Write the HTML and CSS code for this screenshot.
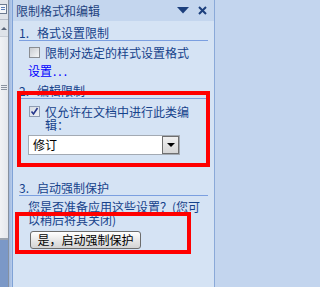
FILE: index.html
```html
<!DOCTYPE html>
<html lang="zh-CN">
<head>
<meta charset="utf-8">
<link rel="stylesheet" href="styles.css">
</head>
<body>
<div class="side">
  <div class="side-top">
    <svg class="doc-icon" width="9" height="12" viewBox="0 0 9 12"><rect x="0.5" y="1.5" width="7" height="9" fill="#f4f6f9" stroke="#6b7a90"/><rect x="2" y="4" width="4" height="1" fill="#5d7fb8"/><rect x="2" y="6" width="4" height="1" fill="#5d7fb8"/></svg>
  </div>
  <div class="side-arrow"><span class="up"></span></div>
  <div class="thumb"><span class="grip"></span></div>
  <div class="side-bottom"></div>
</div>
<div class="split"></div>
<div class="panel">
  <div class="titlebar">
    <span class="title">限制格式和编辑</span>
    <svg class="tb-icon" width="12" height="7" viewBox="0 0 12 7"><polygon points="0,0 12,0 6,6.5" fill="#1c3f7c"/></svg>
    <svg class="tb-icon close" width="9" height="9" viewBox="0 0 9 9"><path d="M1 1 L8 8 M8 1 L1 8" stroke="#1c3f7c" stroke-width="2"/></svg>
  </div>
  <div class="content">
    <div class="heading"><span class="num">1.</span>格式设置限制</div>
    <div class="check-row first">
      <span class="box"></span>
      <span class="label">限制对选定的样式设置格式</span>
    </div>
    <div class="link">设置<span class="dots">...</span></div>

    <div class="heading second"><span class="num">2.</span>编辑限制</div>
    <div class="check-row second">
      <span class="box checked"><svg width="9" height="9" viewBox="0 0 9 9"><path d="M1.5 4.5 L3.5 7 L7.5 1" fill="none" stroke="#26388e" stroke-width="1.6"/></svg></span>
      <span class="label">仅允许在文档中进行此类编辑：</span>
    </div>
    <div class="select">
      <span class="sel-text">修订</span>
      <span class="sel-btn"><span class="down"></span></span>
    </div>

    <div class="heading third"><span class="num">3.</span>启动强制保护</div>
    <div class="para">您是否准备应用这些设置？(您可以稍后将其关闭)</div>
    <div class="btn-row"><span class="button">是，启动强制保护</span></div>
  </div>
</div>
<div class="mark mark-one"></div>
<div class="mark mark-two"></div>
</body>
</html>
```

FILE: styles.css
```css
html, body {
  margin: 0;
  padding: 0;
}
body {
  width: 216px;
  height: 287px;
  overflow: hidden;
  display: flex;
  position: relative;
  background: #c3d5ee;
  font-family: "Noto Sans CJK SC", "Noto Sans", sans-serif;
  font-size: 12px;
  color: #15428b;
}
.side {
  width: 8px;
  display: flex;
  flex-direction: column;
  background: #dfe3e9;
  border-right: 1px solid #8590a0;
}
.side-top {
  height: 20px;
  border-bottom: 1px solid #b6bdc8;
  display: flex;
  align-items: flex-start;
  padding-top: 3px;
  box-sizing: border-box;
}
.doc-icon {
  margin-left: -1px;
}
.side-arrow {
  height: 16px;
  display: flex;
  justify-content: center;
  align-items: center;
}
.up {
  width: 0;
  height: 0;
  border-left: 3px solid transparent;
  border-right: 3px solid transparent;
  border-bottom: 3px solid #5a6578;
}
.thumb {
  flex: 0 0 204px;
  background: linear-gradient(90deg, #f0f2f5, #e4e7ec);
  border-top: 1px solid #c9ced6;
  border-bottom: 2px solid #9aa3b0;
  box-sizing: border-box;
  display: flex;
  align-items: center;
  justify-content: center;
}
.grip {
  width: 6px;
  height: 5px;
  margin-top: -100px;
  background: repeating-linear-gradient(180deg, #8a93a0 0 1px, transparent 1px 2px);
}
.side-bottom {
  flex: 1;
  background: #7b98c7;
}
.split {
  width: 3px;
  background: linear-gradient(90deg, #9eb6dc, #b8cdec);
}
.panel {
  width: 201px;
  background: #d5e3f4;
  border-left: 1px solid #7fa2d6;
  border-right: 1px solid #8aa9d8;
  display: flex;
  flex-direction: column;
}
.titlebar {
  height: 21px;
  background: #c4d6ee;
  display: flex;
  align-items: center;
  padding-left: 3px;
  box-sizing: border-box;
}
.title {
  flex: 1;
  line-height: 14px;
  color: #1e4280;
  font-size: 12px;
}
.tb-icon {
  margin-right: 9px;
}
.tb-icon.close {
  margin-right: 7px;
}
.content {
  padding: 0 6px 0 6px;
  display: flex;
  flex-direction: column;
}
.heading {
  line-height: 14px;
  height: 14px;
  border-bottom: 1px solid #7b9fe0;
  margin-top: 5px;
  padding-left: 0;
  white-space: nowrap;
}
.heading.second {
  margin-top: 6px;
}
.heading.third {
  margin-top: 26px;
}
.num {
  display: inline-block;
  width: 18px;
}
.check-row {
  display: flex;
  align-items: flex-start;
  padding-left: 10px;
  line-height: 13px;
  margin-top: 5px;
}
.check-row.second {
  margin-top: 6px;
}
.box {
  flex: 0 0 auto;
  width: 11px;
  height: 11px;
  box-sizing: border-box;
  border: 1px solid #8a8d92;
  background: linear-gradient(135deg, #c9ccd1, #f6f7f8);
  margin-top: 1px;
  margin-right: 5px;
  display: flex;
  align-items: center;
  justify-content: center;
}
.box.checked {
  background: linear-gradient(135deg, #d7dce4, #eef1f5);
  border-color: #8e9cb3;
}
.label {
  width: 152px;
}
.link {
  color: #0000ff;
  padding-left: 9px;
  line-height: 14px;
  margin-top: 5px;
}
.dots {
  letter-spacing: 2px;
  margin-left: 1px;
}
.select {
  margin-top: 4px;
  margin-left: 9px;
  width: 152px;
  height: 20px;
  box-sizing: border-box;
  border: 1px solid #a3aab3;
  background: #ffffff;
  display: flex;
  align-items: center;
  padding-left: 4px;
  color: #000000;
}
.sel-text {
  flex: 1;
  line-height: 14px;
}
.sel-btn {
  width: 17px;
  height: 18px;
  box-sizing: border-box;
  border: 1px solid #6f6f6f;
  background: linear-gradient(180deg, #f0f0f0, #d6d6d6);
  display: flex;
  align-items: center;
  justify-content: center;
}
.down {
  width: 0;
  height: 0;
  border-left: 4px solid transparent;
  border-right: 4px solid transparent;
  border-top: 4px solid #000000;
}
.para {
  margin-top: 4px;
  padding-left: 9px;
  line-height: 13px;
}
.btn-row {
  margin-top: 5px;
  padding-left: 11px;
  display: flex;
}
.button {
  width: 111px;
  height: 18px;
  box-sizing: border-box;
  border: 1px solid #6c6c6c;
  border-radius: 3px;
  background: linear-gradient(180deg, #ffffff, #e4e4e4 60%, #d4d4d4);
  color: #000000;
  line-height: 16px;
  text-align: center;
}
.mark {
  position: absolute;
  border: 4px solid #ff0000;
  box-sizing: border-box;
}
.mark-one {
  left: 17px;
  top: 91px;
  width: 193px;
  height: 76px;
}
.mark-two {
  left: 15px;
  top: 212px;
  width: 176px;
  height: 42px;
}
```
